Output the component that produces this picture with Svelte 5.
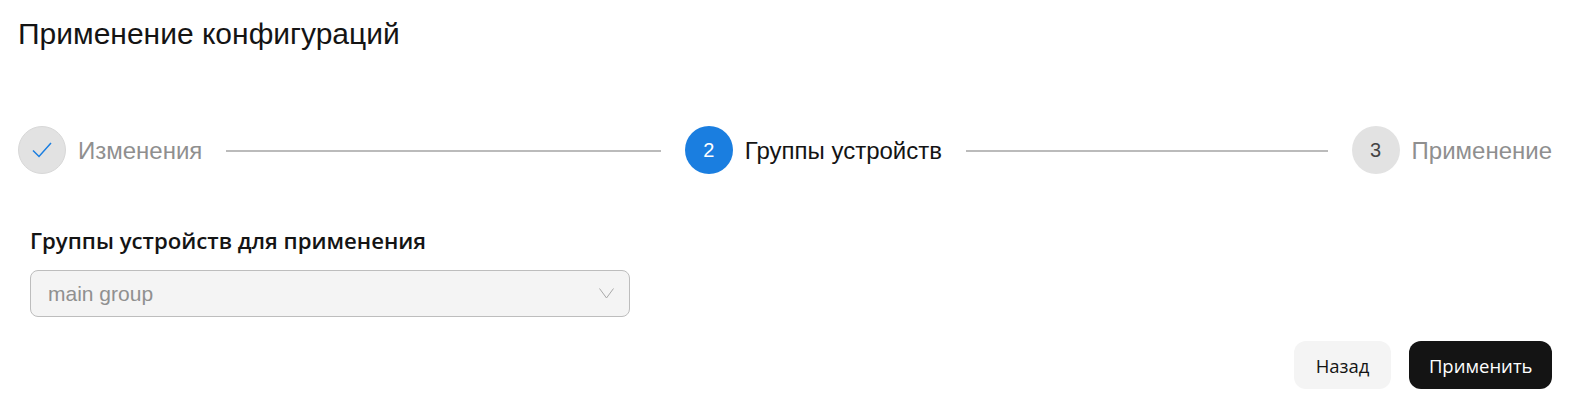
<script>
  const steps = [
    { label: "Изменения", state: "done" },
    { label: "Группы устройств", state: "active" },
    { label: "Применение", state: "todo" },
  ];
</script>

<div class="page">
  <h1 class="title">Применение конфигураций</h1>

  <div class="steps">
    {#each steps as step, i}
      <div class="step {step.state}">
        <span class="circle">
          {#if step.state === "done"}
            <svg width="20" height="16" viewBox="0 0 20 16" fill="none">
              <path d="M1 8.5 L7 14.5 L19 1" stroke="#1a7ee0" stroke-width="1.5" />
            </svg>
          {:else}
            {i + 1}
          {/if}
        </span>
        <span class="step-label">{step.label}</span>
        {#if i < steps.length - 1}
          <span class="line"></span>
        {/if}
      </div>
    {/each}
  </div>

  <div class="form">
    <div class="field-label">Группы устройств для применения</div>
    <div class="select">
      <span>main group</span>
      <svg width="15" height="11" viewBox="0 0 15 11" fill="none">
        <path d="M0.5 0.5 L7.5 10 L14.5 0.5" stroke="#a8a8a8" stroke-width="1" />
      </svg>
    </div>
  </div>

  <div class="actions">
    <button class="btn back">Назад</button>
    <button class="btn primary">Применить</button>
  </div>
</div>

<style>
  :global(body) {
    margin: 0;
    background: #fff;
  }

  .page {
    padding: 15px 30px 0 18px;
    font-family: "Liberation Sans", Arial, sans-serif;
    color: #141414;
  }

  .title {
    margin: 0;
    font-size: 30px;
    font-weight: 400;
    line-height: 38px;
  }

  .steps {
    display: flex;
    margin-top: 73px;
  }
  .step {
    display: flex;
    align-items: center;
    flex: 1;
    padding-right: 24px;
  }
  .step:last-child {
    flex: none;
    padding-right: 0;
  }

  .circle {
    display: flex;
    align-items: center;
    justify-content: center;
    flex-shrink: 0;
    box-sizing: border-box;
    width: 48px;
    height: 48px;
    border-radius: 50%;
    font-size: 20px;
    background: #e2e2e2;
    color: #444;
  }
  .done .circle { border: 1px solid #d8d8d8; }
  .active .circle { background: #1a7ee0; color: #fff; }

  .step-label {
    margin-left: 12px;
    padding-top: 2px;
    font-size: 24px;
    white-space: nowrap;
    color: #8f8f8f;
  }
  .active .step-label { color: #141414; }

  .line {
    flex: 1;
    height: 2px;
    margin-left: 24px;
    margin-top: 2px;
    background: #bbb;
  }

  .form {
    margin-left: 12px;
    padding-top: 53px;
    width: 600px;
  }
  .field-label {
    font-family: "Open Sans", sans-serif;
    font-size: 22.2px;
    font-weight: 600;
    line-height: 28px;
  }
  .select {
    display: flex;
    align-items: center;
    justify-content: space-between;
    box-sizing: border-box;
    height: 47px;
    margin-top: 15px;
    padding: 0 15px 0 17px;
    font-size: 21px;
    color: #909090;
    background: #f4f4f4;
    border: 1px solid #bdbdbd;
    border-radius: 8px;
  }

  .actions {
    display: flex;
    justify-content: flex-end;
    gap: 18px;
    margin-top: 24px;
  }
  .btn {
    height: 48px;
    border: none;
    border-radius: 12px;
    font-family: "Open Sans", sans-serif;
    font-size: 18.5px;
  }
  .back { padding: 0 22px; background: #f4f4f4; color: #141414; }
  .primary { padding: 0 19.5px; background: #141414; color: #fff; }
</style>
